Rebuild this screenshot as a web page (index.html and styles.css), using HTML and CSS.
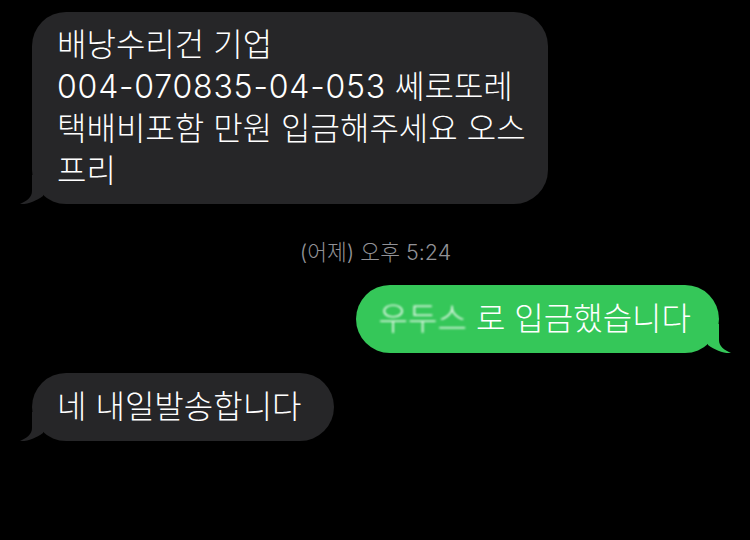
FILE: index.html
```html
<!DOCTYPE html>
<html lang="ko">
<head>
<meta charset="utf-8">
<link rel="stylesheet" href="styles.css">
</head>
<body>
<div class="thread">
  <div class="bubble in wide">
    배낭수리건 기업<br><span class="num">004-070835-04-053</span> 쎄로또레<br>택배비포함 만원 입금해주세요 오스<br>프리
    <svg class="tail tail-in" width="30" height="30" viewBox="0 0 30 30"><path d="M12 0 V16 C12 22 7 26 0 29 C8 29.5 16 26 23 21 L23 0 Z"/></svg>
  </div>
  <div class="time">(어제) 오후 5:24</div>
  <div class="bubble out">
    <span class="masked">우두스</span> 로 입금했습니다
    <svg class="tail tail-out" width="30" height="30" viewBox="0 0 30 30"><path d="M18 0 V16 C18 22 23 26 30 29 C22 29.5 14 26 7 21 L7 0 Z"/></svg>
  </div>
  <div class="bubble in last">
    네 내일발송합니다
    <svg class="tail tail-in" width="30" height="30" viewBox="0 0 30 30"><path d="M12 0 V16 C12 22 7 26 0 29 C8 29.5 16 26 23 21 L23 0 Z"/></svg>
  </div>
</div>
</body>
</html>
```
FILE: styles.css
```css
html, body {
  margin: 0;
  background: #000;
}
body {
  width: 750px;
  height: 540px;
  overflow: hidden;
  font-family: Inter, "Noto Sans CJK KR", "Noto Sans", sans-serif;
  color: #fff;
}
.thread {
  display: flex;
  flex-direction: column;
  padding: 12px 31px 0 32px;
}
.bubble {
  position: relative;
  font-size: 32px;
  font-weight: 300;
  line-height: 42px;
  padding: 13px 32px 13px 25px;
  border-radius: 34px;
  white-space: nowrap;
}
.bubble.in {
  align-self: flex-start;
  background: #262628;
}
.bubble.out {
  align-self: flex-end;
  background: #35c759;
  margin-bottom: 20px;
  padding-left: 23px;
  padding-right: 28px;
}
.bubble.wide {
  box-sizing: border-box;
  width: 516px;
  padding-top: 12px;
  padding-bottom: 12px;
  margin-bottom: 36px;
}
.num {
  letter-spacing: 0.8px;
}
.tail {
  position: absolute;
  bottom: -1px;
}
.tail-in {
  left: -12px;
  fill: #262628;
}
.tail-out {
  right: -12px;
  fill: #35c759;
}
.time {
  text-align: center;
  font-size: 21.5px;
  font-weight: 300;
  line-height: 24px;
  color: #929297;
  margin-bottom: 21px;
}
.masked {
  filter: blur(0.8px);
  opacity: 0.85;
}
```
